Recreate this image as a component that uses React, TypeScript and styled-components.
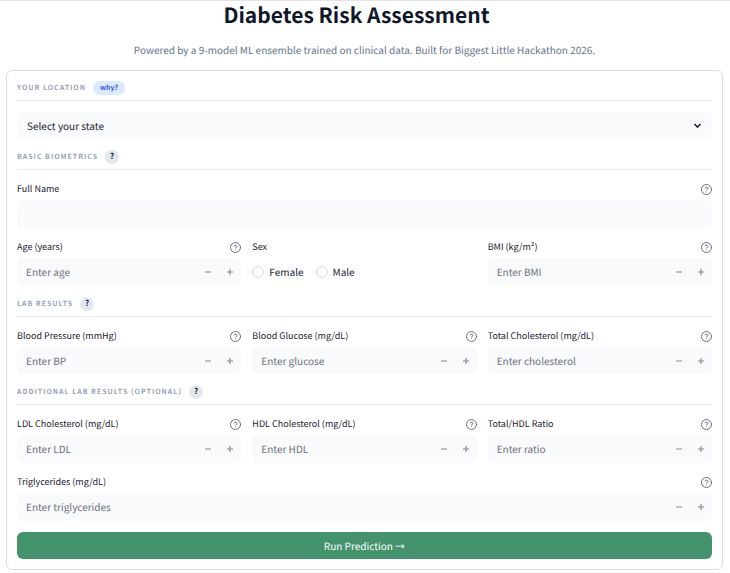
import React, { useId } from "react";
import styled, { createGlobalStyle } from "styled-components";
import { CircleQuestionMark } from "lucide-react";

const GlobalStyle = createGlobalStyle`
  *, *::before, *::after { box-sizing: border-box; }
  body {
    margin: 0;
    background: #ffffff;
    color: #1c2133;
    font-family: "Noto Sans CJK SC", "Open Sans", sans-serif;
    font-size: 10px;
    font-weight: 400;
    line-height: 16px;
    text-rendering: geometricPrecision;
  }
  button, input, select { font: inherit; color: inherit; text-rendering: inherit; }
`;

const Page = styled.main`
  border-top: 1px solid #e4e4e7;
  padding: 0 7px 2px 6px;
`;

const Title = styled.h1`
  margin: 0;
  padding-right: 16px;
  font-size: 21px;
  line-height: 28px;
  font-weight: 700;
  text-align: center;
  color: #0f172a;
`;

const Subtitle = styled.p`
  margin: 13px 0 12px;
  text-align: center;
  color: #64748b;
`;

const Form = styled.form`
  display: flex;
  flex-direction: column;
  gap: 11px;
  padding: 10px;
  border: 1px solid #dcdde1;
  border-radius: 6px;
`;

const SectionHead = styled.div`
  display: flex;
  align-items: center;
  gap: 7px;
  padding-bottom: 5px;
  border-bottom: 1px solid #e8ecf1;
`;

const SectionTitle = styled.h2`
  margin: 0;
  font-size: 7px;
  line-height: 14px;
  font-weight: 700;
  letter-spacing: 1px;
  text-transform: uppercase;
  color: #94a3b8;
`;

const WhyButton = styled.button`
  height: 14px;
  padding: 0 7px;
  border: 0;
  border-radius: 7px;
  background: #dbeafe;
  color: #3b5bdb;
  font-size: 7px;
  line-height: 14px;
  font-weight: 700;
`;

const HintButton = styled.button`
  width: 14px;
  height: 14px;
  padding: 0;
  border: 0;
  border-radius: 50%;
  background: #e2e8f0;
  color: #0f172a;
  font-size: 8px;
  line-height: 14px;
  font-weight: 700;
`;

const SelectBox = styled.div`
  display: grid;
  align-items: center;
  border-radius: 6px;
  background: #f8fafc;

  > * { grid-area: 1 / 1; }
  > svg { justify-self: end; margin-right: 10px; pointer-events: none; }
`;

const Select = styled.select`
  appearance: none;
  width: 100%;
  height: 27px;
  padding: 0 24px 0 10px;
  border: 0;
  border-radius: 6px;
  background: transparent;
`;

const Columns = styled.div`
  display: grid;
  grid-template-columns: repeat(3, minmax(0, 1fr));
  gap: 11px;
`;

const Field = styled.div`
  display: flex;
  flex-direction: column;
  gap: 3px;
`;

const LabelRow = styled.div`
  display: flex;
  align-items: center;
  justify-content: space-between;
  height: 16px;
  font-size: 9px;
`;

const HelpButton = styled.button`
  display: flex;
  padding: 0;
  border: 0;
  background: none;
  color: #6b6f7b;
`;

const InputBox = styled.div<{ $compact?: boolean }>`
  display: flex;
  height: ${(p) => (p.$compact ? 27 : 28)}px;
  overflow: hidden;
  border-radius: 6px;
  background: #f8fafc;
`;

const Input = styled.input`
  flex: 1;
  min-width: 0;
  padding: 0 9px;
  border: 0;
  background: transparent;
  appearance: textfield;

  &::placeholder { color: #6c717e; opacity: 1; }
  &::-webkit-inner-spin-button { display: none; }
`;

const StepButton = styled.button`
  display: flex;
  align-items: center;
  justify-content: center;
  width: 22px;
  padding: 0;
  border: 0;
  background: none;
  color: #858995;
`;

const RadioGroup = styled.fieldset`
  display: flex;
  flex-direction: column;
  gap: 3px;
  min-width: 0;
  margin: 0;
  padding: 0;
  border: 0;
`;

const RadioLegend = styled.legend`
  float: left;
  height: 16px;
  padding: 0;
  font-size: 9px;
`;

const RadioRow = styled.div`
  display: flex;
  align-items: center;
  gap: 12px;
  height: 28px;
`;

const RadioLabel = styled.label`
  display: flex;
  align-items: center;
  gap: 5px;
`;

const Radio = styled.input`
  appearance: none;
  width: 12px;
  height: 12px;
  margin: 0;
  border: 1px solid #d8dce3;
  border-radius: 50%;
  background: #ffffff;

  &:checked { border: 4px solid #43936c; }
`;

const Submit = styled.button`
  height: 27px;
  border: 0;
  border-radius: 6px;
  background: #43936c;
  color: #ffffff;
`;

function Help({ topic }: { topic: string }) {
  return (
    <HelpButton type="button" aria-label={`Help for ${topic}`}>
      <CircleQuestionMark size={11} viewBox="1 1 22 22" strokeWidth={2} />
    </HelpButton>
  );
}

function Section({ title, why }: { title: string; why?: boolean }) {
  return (
    <SectionHead>
      <SectionTitle>{title}</SectionTitle>
      {why ? <WhyButton type="button">why?</WhyButton> : <HintButton type="button">?</HintButton>}
    </SectionHead>
  );
}

function NumberField({ label, placeholder, compact }: { label: string; placeholder: string; compact?: boolean }) {
  const id = useId();
  return (
    <Field>
      <LabelRow>
        <label htmlFor={id}>{label}</label>
        <Help topic={label} />
      </LabelRow>
      <InputBox $compact={compact}>
        <Input id={id} type="number" placeholder={placeholder} />
        <StepButton type="button" aria-label={`Decrease ${label}`}>
          <svg width="8" height="8" viewBox="0 0 8 8" stroke="currentColor" strokeWidth="1.2">
            <path d="M1 4h6" />
          </svg>
        </StepButton>
        <StepButton type="button" aria-label={`Increase ${label}`}>
          <svg width="8" height="8" viewBox="0 0 8 8" stroke="currentColor" strokeWidth="1.2">
            <path d="M1 4h6M4 1v6" />
          </svg>
        </StepButton>
      </InputBox>
    </Field>
  );
}

export default function App() {
  return (
    <>
      <GlobalStyle />
      <Page>
        <Title>Diabetes Risk Assessment</Title>
        <Subtitle>
          Powered by a 9-model ML ensemble trained on clinical data. Built for Biggest Little Hackathon 2026.
        </Subtitle>
        <Form onSubmit={(e) => e.preventDefault()}>
          <Section title="Your Location" why />
          <SelectBox>
            <Select aria-label="State" defaultValue="">
              <option value="">Select your state</option>
              <option value="CA">California</option>
              <option value="NV">Nevada</option>
            </Select>
            <svg width="9" height="9" viewBox="0 0 9 9" fill="none" stroke="#1e2436" strokeWidth="1.6">
              <path d="M1.5 3l3 3 3-3" />
            </svg>
          </SelectBox>

          <Section title="Basic Biometrics" />
          <Field>
            <LabelRow>
              <label htmlFor="full-name">Full Name</label>
              <Help topic="Full Name" />
            </LabelRow>
            <InputBox>
              <Input id="full-name" type="text" />
            </InputBox>
          </Field>
          <Columns>
            <NumberField label="Age (years)" placeholder="Enter age" compact />
            <RadioGroup>
              <RadioLegend>Sex</RadioLegend>
              <RadioRow>
                <RadioLabel>
                  <Radio type="radio" name="sex" value="female" />
                  Female
                </RadioLabel>
                <RadioLabel>
                  <Radio type="radio" name="sex" value="male" />
                  Male
                </RadioLabel>
              </RadioRow>
            </RadioGroup>
            <NumberField label="BMI (kg/m²)" placeholder="Enter BMI" compact />
          </Columns>

          <Section title="Lab Results" />
          <Columns>
            <NumberField label="Blood Pressure (mmHg)" placeholder="Enter BP" compact />
            <NumberField label="Blood Glucose (mg/dL)" placeholder="Enter glucose" compact />
            <NumberField label="Total Cholesterol (mg/dL)" placeholder="Enter cholesterol" compact />
          </Columns>

          <Section title="Additional Lab Results (Optional)" />
          <Columns>
            <NumberField label="LDL Cholesterol (mg/dL)" placeholder="Enter LDL" />
            <NumberField label="HDL Cholesterol (mg/dL)" placeholder="Enter HDL" />
            <NumberField label="Total/HDL Ratio" placeholder="Enter ratio" />
          </Columns>
          <NumberField label="Triglycerides (mg/dL)" placeholder="Enter triglycerides" />

          <Submit type="submit">Run Prediction →</Submit>
        </Form>
      </Page>
    </>
  );
}
